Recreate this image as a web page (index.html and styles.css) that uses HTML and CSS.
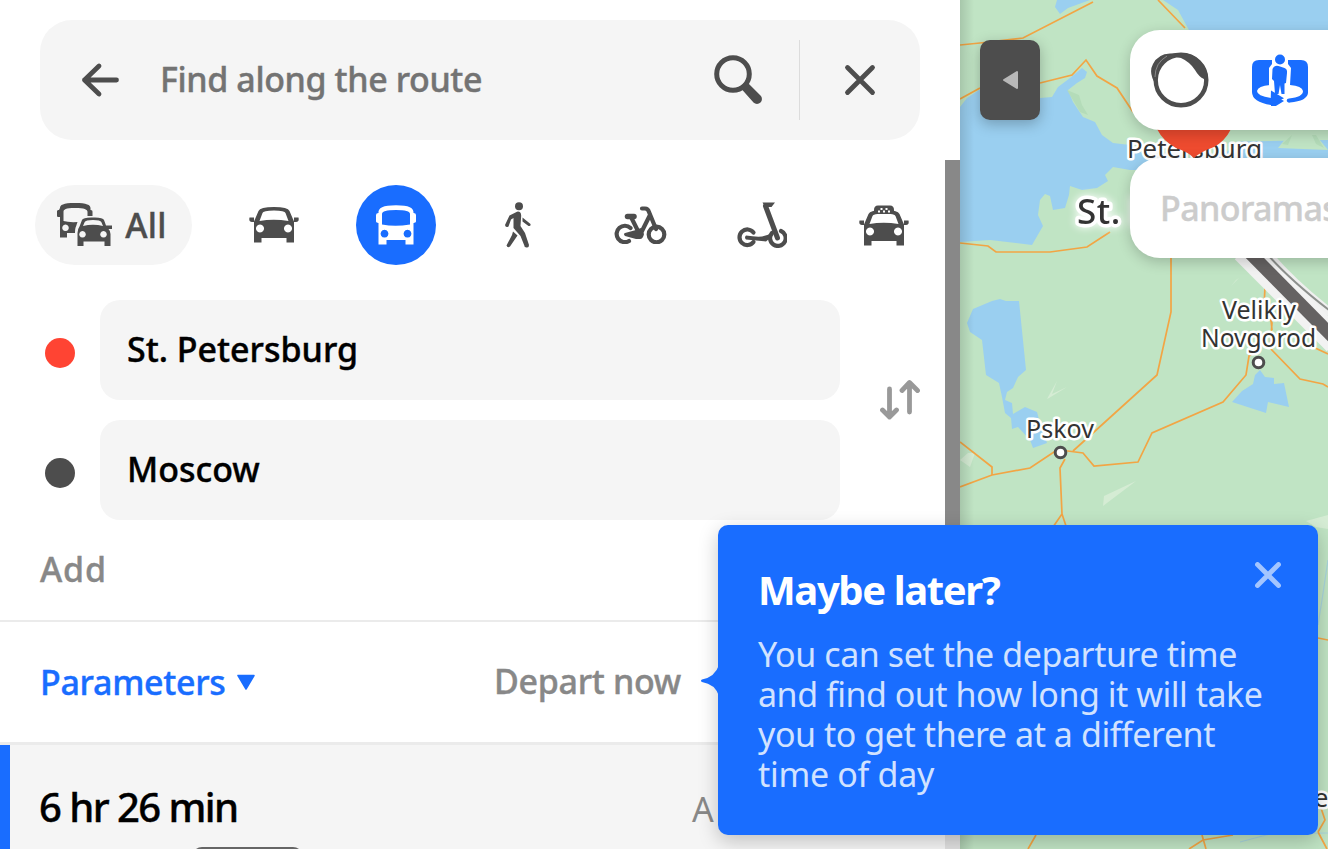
FILE: index.html
```
<!DOCTYPE html>
<html lang="en">
<head>
<meta charset="utf-8">
<title>Route</title>
<link rel="stylesheet" href="styles.css">
</head>
<body>
<div class="app">
  <aside class="panel">
    <header class="search-wrap">
      <div class="search">
        <button class="back" aria-label="Back"><svg width="40" height="36" viewBox="0 0 40 36"><path d="M36.500 18H4.500M19 4L4.500 18 19 32" class="line" stroke-width="4.800"/></svg></button>
        <span class="search-text fit-search">Find along the route</span>
        <svg class="lens" width="50" height="50" viewBox="0 0 50 50"><circle cx="20" cy="19" r="16.300" class="line" stroke-width="5"/><path d="M31 28l3-1 13.500 13.500a4.800 4.800 0 0 1-7 7L28.500 34l1-3z" class="fill"/></svg>
        <span class="sep"></span>
        <button class="clear" aria-label="Close"><svg width="32" height="32" viewBox="0 0 32 32"><path d="M3.500 3.500l25 25M28.500 3.500l-25 25" class="line" stroke-width="4.800"/></svg></button>
      </div>
    </header>
    <div class="scroll">
      <div class="content">
        <nav class="modes">
          <button class="mode mode-all">
            <svg width="56" height="46" viewBox="0 0 56 46"><path class="fill" fill-rule="evenodd" d="M3 6C3 3 6 1 18 1s15.500 2 15.500 5v2c1.800 0 2 .800 2 2v4h-5v-4c0-2.500-3-4-12.500-4S6.500 7.500 6.500 10v9q5 1.500 14 1l-1.500 4.500Q18 26 18 31h-8v4.500H3V15H1.500c-1 0-1.500-.500-1.500-1.500V9.500C0 8.500.500 8 2 8zM8.500 22.500a3.300 3.300 0 1 0 .010 0z"/><path class="fill" fill-rule="evenodd" d="M22.500 24.500l2.500-6.500q1-2.500 9-2.500h4q8 0 9 2.500l2 5.500h6v3.500h-3.500q2 2 2 5v12h-6v-4.500h-21V44h-6V31q0-4 2-6.500zm3.500-.500q10-2.500 20 0l-1.700-4q-.800-2-8.300-2t-8.300 2zm-.500 5a3.300 3.300 0 1 0 .010 0zm21 0a3.300 3.300 0 1 0 .010 0z"/></svg>
            <span class="fit-all">All</span>
          </button>
          <button class="mode" aria-label="Car"><svg width="50" height="36" viewBox="0 0 50 36"><use href="#car"/></svg></button>
          <button class="mode mode-active" aria-label="Transit"><svg width="40" height="40" viewBox="0 0 40 40"><path fill="#fff" fill-rule="evenodd" d="M2.500 8C2 3 7 .300 20 .300S38 3 37.500 8q2.500 0 2.500 2v6.500q0 1-2.500 1.500V39.500h-8V35h-19v4.500h-8V18Q0 17.500 0 16.500V10q0-2 2.500-2zM6 9v10.500q13 2.500 28 0V9q0-4-14-4T6 9zm2.500 15.800a3.900 3.900 0 1 0 .010 0zm23 0a3.900 3.900 0 1 0 .010 0z"/></svg></button>
          <button class="mode" aria-label="Walk"><svg width="26" height="46" viewBox="0 0 26 46"><circle cx="14" cy="4.200" r="4" class="fill"/><path class="fill" d="M4.500 13.500L12 9.700q4-.700 4.200 4L15.500 24l4.500 7 4 12q0 3-2.500 2.500t-2-1.500L15.500 34 8.500 26V16l-2.500 1.500-2.500 7q-3 1.500-3.500-1.500zM17.500 15.500l8 6.500q.500 2.500-2 2l-6-4.500zM8 29.500l4.500 4L5 44.500Q2.500 46.500 1.500 43.500L7 33z"/></svg></button>
          <button class="mode" aria-label="Bike"><svg width="54" height="38" viewBox="0 0 54 38"><g class="line" stroke-width="4.200"><path d="M17.500 22A8.200 8.200 0 1 0 16 35"/><circle cx="43.500" cy="28.500" r="7.800"/><path d="M29 2.500h3q3 0 4 3.500l7 17M18 11l9 18L37 9"/><path d="M14.500 10.500h6.500" stroke-width="5.500"/></g><path class="fill" d="M12 27l11-3 5-2 3 6q-1 5-4 5H23l-11-3q-2-2 0-3z"/></svg></button>
          <button class="mode" aria-label="Scooter"><svg width="50" height="46" viewBox="0 0 50 46"><g class="line" stroke-width="4.200"><path d="M16.500 30.500A7.800 7.800 0 1 0 16.500 40"/><path d="M35 31a7.800 7.800 0 1 0 9-2"/><path d="M28.500 4L40.500 36" stroke-width="5"/></g><path class="fill" d="M25.500.500H38L34.500 5H28zM9 33.500q9 1.500 16 1l7-2 4 1-7 6L9 37.500q-2-2 0-4z"/></svg></button>
          <button class="mode" aria-label="Taxi"><svg width="50" height="41" viewBox="0 0 50 41"><g transform="translate(0 5)"><use href="#car"/></g><path class="fill" d="M15 9V5q0-4.500 4-4.500h12q4 0 4 4.500v4z"/><path fill="#fff" d="M19 5.500h2v2h-2zM21.500 3h2v2h-2zM24 5.500h2v2h-2zM26.500 3h2v2h-2zM29 5.500h2v2h-2z"/></svg></button>
        </nav>
        <div class="points">
          <div class="point-list">
            <div class="point"><span class="dot dot-from"></span><div class="field"><span class="fit-from">St. Petersburg</span></div></div>
            <div class="point"><span class="dot"></span><div class="field"><span class="fit-to">Moscow</span></div></div>
          </div>
          <svg class="swap" width="40" height="42" viewBox="0 0 40 42"><path d="M9.500 10v28M2.500 31l7 7 7-7M29.500 33V4M22 11.500l7.500-8 8 8" fill="none" stroke="#999" stroke-width="4.800" stroke-linecap="round" stroke-linejoin="round"/></svg>
        </div>
        <div class="add"><span class="fit-add">Add</span></div>
        <div class="params">
          <span class="params-link"><span class="fit-params">Parameters</span><svg width="18" height="17" viewBox="0 0 18 17"><path d="M1 1.500h16L9 15z" fill="#196dff" stroke="#196dff" stroke-width="1.500" stroke-linejoin="round"/></svg></span>
          <span class="depart fit-depart">Depart now</span>
        </div>
        <div class="route">
          <div class="route-head"><span class="duration fit-dur">6 hr 26 min</span><span class="arrival">A</span></div>
          <div class="badge"></div>
        </div>
      </div>
      <div class="track"><div class="thumb"></div></div>
    </div>
  </aside>

  <main class="map">
    <svg class="map-canvas" viewBox="960 0 368 849">
      <defs><linearGradient id="edge"><stop offset="0" stop-opacity=".13"/><stop offset="1" stop-opacity="0"/></linearGradient></defs>
      <rect x="960" width="368" height="849" fill="#c0e4c4"/>
      <g fill="#9acff0">
        <path d="M960 107l7-9 12-8 61 8 12-1 6-10 12-9 12-10 5 4-2 6-8 5-9 7 5 12 10 15 12 5 7 13 11 8 17 2 70-3 128-2v30H1130l-17-3-8 8 3 6-11 7-15 2-12-4-1 9-4 13-12 2-3-14-5-2-5 6-2 15 5 11-11 19-42-5-30 2z"/>
        <path d="M1057 0l-2 7 5 7 8-6 22-8zM1163 0l15 10 12 22h138V0zM967 323l6-14 19-8 8-2 6 2 13 0 7 69-8 7-5 11-6 4-2 8 7 3 1 11 12-7 12 5 3 11 7 20-14 5-3-8-12-13-6 2-1-11-6-5-3-16-3-14-13-8-4-35-12-8z"/>
        <path d="M1260 370l5 7 9 1v6l10-1 5 24-21-5-2 11-34-11 10-11 11-7 2-9z"/>
      </g>
      <path d="M1150 125h92l-5 20-20 13h-68l-20-14zM1278 148l12-15 20 5 4-5 14 17z" fill="#c0e4c4"/>
      <path d="M1067 90l12 5 3 10 6 10-8-3zM1282 144l10-9-4 10zM1312 135l4 0 8 13-8-4z" fill="#b4dcb9"/>
      <path d="M1047 399l10-18-5 13 15-7-18 11zM1103 506l1-10 32-15zM1231 286l5-6 3-2zM960 460l8-7h7l-5 14zM1306 521l22-6v14l-12-2z" fill="#d5ecd4"/>
      <path d="M1328 560l-6 40-4 25M1240 842l30-8 58-1" fill="none" stroke="#a8d4dc" stroke-width="1.200"/>
      <g fill="none" stroke="#f2a544" stroke-width="1.700">
        <path d="M960 45l20-2 43-5 70-36M960 99l20-11M1040 83l32-8 14-15 11 16 20 12 16 24M1158 0l27 28M960 243l28 3 8 6h54l37-5 23-15"/>
        <path d="M1171 258v54l-14 63-84 76M1060 450l23 3 11 13 44-4 14-29 71-31 23-27 3-19 8-6M1265 287l-1 20 8 16-2 25 30 31 23 5 5 3M1270 310l2 20M1313 347l15 7M960 442l32 25v8M960 487l32-12 38-7 27-18M1065 459l-5 9 2 46-9 13M1062 514l4 12"/>
        <path d="M1328 640l-10-2M1036 835l-8 14M1189 849l14-9 30-5M1202 835l4 14M1318 832l7-12-4-12M1318 832l9 17"/>
      </g>
      <path d="M1265 250q25 32 75 70" fill="none" stroke="#efefef" stroke-width="8"/>
      <path d="M1244 250l92 92" stroke="#f2f2f2" stroke-width="26"/>
      <path d="M1268 255q25 28 70 62" fill="none" stroke="#8d908d" stroke-width="2"/>
      <path d="M1246 249l92 93" stroke="#656262" stroke-width="13"/>
      <g fill="#fff" stroke="#4d4d4d" stroke-width="3"><circle cx="1060.500" cy="452.500" r="5.300"/><circle cx="1258.500" cy="362.500" r="5.300"/></g>
      <g class="city">
        <text x="1127" y="157.500" textLength="135" lengthAdjust="spacingAndGlyphs">Petersburg</text>
        <text x="1222" y="318.500" textLength="74" lengthAdjust="spacingAndGlyphs">Velikiy</text>
        <text x="1201" y="346.500" textLength="115" lengthAdjust="spacingAndGlyphs">Novgorod</text>
        <text x="1026" y="437.500" textLength="68" lengthAdjust="spacingAndGlyphs">Pskov</text>
        <text x="1314" y="807">e</text>
      </g>
      <path d="M1157 129h74q-6 12-17 18-14 5-20 11-6-6-18-10-13-7-19-19z" fill="#ee4b2f"/>
      <text x="1077" y="224" class="capital">St. P</text>
      <rect x="960" width="14" height="849" fill="url(#edge)"/>
    </svg>
    <div class="overlay">
      <button class="toggle" aria-label="Collapse"><svg width="17" height="20" viewBox="0 0 17 20"><path d="M15 2v16L2 10z" fill="#b8b8b8" stroke="#b8b8b8" stroke-width="2" stroke-linejoin="round"/></svg></button>
      <div class="cards">
        <div class="tools">
          <svg width="60" height="58" viewBox="0 0 60 58"><path d="M6 34Q-2 22 3 13 8 3 20 2.500L32 2z" fill="#4d4d4d"/><circle cx="31" cy="29" r="25.300" fill="#fff" stroke="#4d4d4d" stroke-width="4.400"/><path d="M28 2Q43 1 51 11q7 8 7 18l-4-1q-5-2-9-9-5-8-14-12l-5-1z" fill="#4d4d4d"/><path d="M17 5Q5 12 5 26" fill="none" stroke="#999" stroke-width=".800"/></svg>
          <svg width="56" height="52" viewBox="0 0 56 52">
            <path fill="#196dff" d="M7 6h42q7 0 7 7v26q-1 8-18 9.500-2 .500-3-1-1-3 2-3Q51 43 51 37q-1-5-13-6l-1 8-7 4V8h-7v34l-3-3-2-8q-12 1-13 6 0 5 14 7v-4.500l13 7.500-13 8v-4Q0 48 0 38V13q0-7 7-7z"/>
            <path fill="#fff" d="M20 4h16v6l3 4-1 17 4 8-9 6H20l-2-7-1-7V14l3-4z"/>
            <path fill="#196dff" d="M20.500 15q2-4 6-3l6 2q3 1 2.500 5l-1 10-1.500.500V40h-3l-1.500-9-1.500 9H23l-1-13-2-2zM19 36.500l13 7.700L18.500 51z"/>
            <circle cx="28" cy="5.500" r="5" fill="#196dff"/>
          </svg>
        </div>
        <div class="pano"><span class="fit-pano">Panoramas</span></div>
      </div>
    </div>
  </main>
</div>

<section class="tip">
  <svg class="tip-tail" width="18" height="32" viewBox="0 0 18 32"><path d="M18 0Q14 12 1 14.500q-2 1 0 2.500 13 2 17 14z" fill="#196dff"/></svg>
  <div class="tip-title"><h2 class="fit-title">Maybe later?</h2>
    <svg width="26" height="26" viewBox="0 0 26 26"><path d="M2.500 2.500l21 21M23.500 2.500l-21 21" stroke="#a3c5ff" stroke-width="4.800" stroke-linecap="round"/></svg></div>
  <p><span class="fit-l1">You can set the departure time</span><br><span class="fit-l2">and find out how long it will take</span><br><span class="fit-l3">you to get there at a different</span><br><span class="fit-l4">time of day</span></p>
</section>

<svg width="0" height="0" class="defs"><defs><path id="car" class="fill" fill-rule="evenodd" d="M5 14.500L9.500 4Q11 0 25 0t15.500 4L45 14.500q0 2 0 5V35.500h-7.500V31h-25v4.500H5zM10.500 14q14-2.500 29 0L36.500 6Q36 3.500 25 3.500T13.500 6zM11 17.500a4 4 0 1 0 .010 0zm28 0a4 4 0 1 0 .010 0zM.500 10.500H5V15H3q-3.500 0-2.500-4.500zM45 10.500h4.500Q50.500 15 47 15h-2z"/></defs></svg>
</body>
</html>
```
FILE: styles.css
```
* { box-sizing: border-box; }
body { margin: 0; width: 1328px; height: 849px; overflow: hidden; font-family: "Noto Sans", sans-serif; font-size: 34px; line-height: 40px; font-weight: 500; color: #000; }
button { border: 0; padding: 0; background: none; font: inherit; color: inherit; display: flex; align-items: center; justify-content: center; }
svg { display: block; flex: none; }
.defs { position: absolute; }
span { white-space: nowrap; }
.line { fill: none; stroke: #4d4d4d; stroke-linecap: round; stroke-linejoin: round; }
.fill { fill: #4d4d4d; }
.app { display: flex; height: 849px; }
.panel { width: 960px; flex: none; display: flex; flex-direction: column; background: #fff; -webkit-text-stroke: .4px currentColor; }
.search-wrap { height: 160px; padding: 20px 40px; flex: none; }
.search { height: 120px; background: #f5f5f5; border-radius: 32px; display: flex; align-items: center; }
.back { width: 120px; height: 120px; }
.search-text { color: #737373; flex: 1; margin-top: -2px; }
.lens { margin-right: 36px; }
.sep { width: 1px; height: 80px; background: #dcdcdc; }
.clear { width: 120px; height: 120px; }
.scroll { flex: 1; min-height: 0; display: flex; overflow: hidden; }
.content { width: 945px; }
.track { width: 15px; background: #e0e0e0; }
.thumb { height: 480px; background: #888; }
.modes { display: flex; gap: 42px; padding: 25px 0 0 35px; }
.mode { width: 80px; height: 80px; border-radius: 40px; }
.mode-all { width: 157px; background: #f5f5f5; color: #4d4d4d; gap: 12px; padding-right: 3px; }
.mode-active { background: #196dff; }
.points { display: flex; align-items: center; gap: 40px; padding: 35px 0 0 45px; }
.point-list { display: flex; flex-direction: column; gap: 20px; }
.point { display: flex; gap: 25px; align-items: center; }
.dot { width: 30px; height: 30px; border-radius: 50%; background: #4d4d4d; margin-top: 6px; }
.dot-from { background: #ff4433; }
.swap { margin-bottom: 20px; }
.field { width: 740px; height: 100px; border-radius: 20px; background: #f5f5f5; padding: 29px 27px; }
.add { height: 102px; padding: 29px 40px; border-bottom: 2px solid #ebebeb; color: #888; }
.params { height: 123px; padding: 39px 40px; border-bottom: 3px solid #ebebeb; display: flex; }
.params-link { display: flex; align-items: center; gap: 11px; color: #196dff; width: 454px; }
.depart { color: #888; }
.route { height: 110px; border-left: 10px solid #196dff; background: #f5f5f5; padding-top: 42px; }
.route-head { display: flex; align-items: center; padding-left: 29px; height: 40px; }
.duration { font-size: 40px; width: 653px; }
.arrival { color: #888; font-weight: 400; padding-top: 3px; -webkit-text-stroke: 0; }
.badge { margin: 20px 0 0 182px; width: 111px; height: 40px; border-radius: 10px; background: #666; }
.map { position: relative; width: 368px; height: 849px; overflow: hidden; }
.map-canvas { width: 368px; height: 849px; }
.city { font-size: 25.5px; font-weight: 400; fill: #333; stroke: #fff; stroke-width: 5px; stroke-linejoin: round; paint-order: stroke; }
.capital { font-size: 35px; font-weight: 500; letter-spacing: .5px; fill: #333; stroke: #fff; stroke-width: 7px; stroke-linejoin: round; paint-order: stroke; filter: drop-shadow(0 0 4px #fff); }
.overlay { position: absolute; inset: 0; display: flex; padding: 30px 0 0 20px; gap: 90px; }
.toggle { width: 60px; height: 80px; margin-top: 10px; border-radius: 10px; background: #4d4d4d; box-shadow: 0 4px 14px rgba(0,0,0,.25); flex: none; }
.cards { display: flex; flex-direction: column; gap: 28px; }
.tools, .pano { width: 260px; height: 100px; background: #fff; border-radius: 30px; box-shadow: 0 4px 14px rgba(0,0,0,.2); display: flex; align-items: center; }
.tools { padding-left: 20px; gap: 42px; }
.pano { padding-left: 30px; color: #ccc; -webkit-text-stroke: .4px currentColor; }
.tip { position: absolute; left: 718px; top: 525px; width: 600px; height: 310px; border-radius: 10px; background: #196dff; box-shadow: 0 6px 20px rgba(0,0,0,.22); padding: 37px 37px 0 40px; }
.tip-tail { position: absolute; left: -17px; top: 140px; }
.tip-title { display: flex; justify-content: space-between; }
.tip h2 { margin: 0; font-size: 40px; line-height: 55px; font-weight: 700; color: #fff; }
.tip p { margin: 17px 0 0; color: #d1e2ff; font-weight: 400; white-space: nowrap; }
.fit-search { letter-spacing: -.4px; }
.fit-all { letter-spacing: .3px; }
.fit-add { letter-spacing: .8px; }
.fit-params, .fit-depart { letter-spacing: -.3px; }
.fit-dur { letter-spacing: -1.55px; }
.fit-pano { letter-spacing: -.6px; }
.fit-title { letter-spacing: -1.4px; }
.fit-l1 { letter-spacing: -.43px; }
.fit-l2 { letter-spacing: -.48px; }
.fit-l3 { letter-spacing: -.44px; }
.fit-l4 { letter-spacing: -.3px; }
```
